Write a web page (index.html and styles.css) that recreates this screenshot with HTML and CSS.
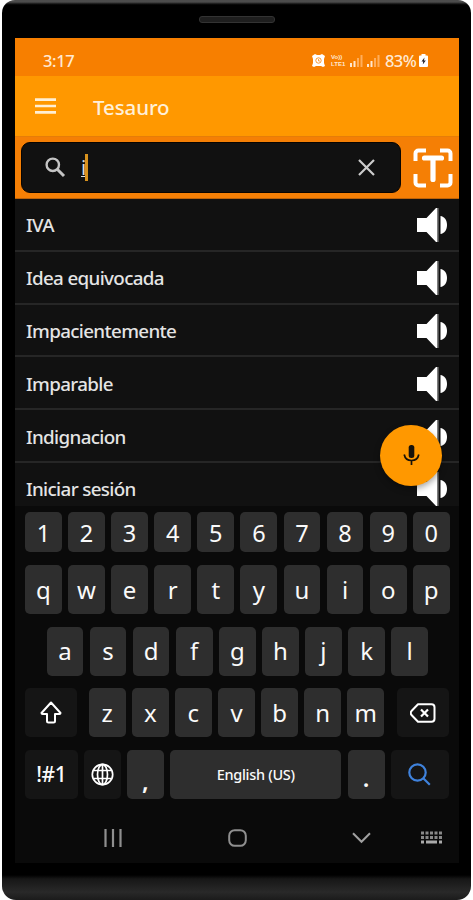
FILE: index.html
```html
<!DOCTYPE html>
<html lang="es">
<head>
<meta charset="utf-8">
<title>Tesauro</title>
<link rel="stylesheet" href="styles.css">
</head>
<body>
<svg class="defs" width="0" height="0">
  <symbol id="speaker" viewBox="0 0 32 36"><path d="M1 11h9.500L20 1h1.500v34H20l-9.500-10H1z" fill="#fff"/><path d="M22 1v34" stroke="#777" stroke-width="1.200"/><path d="M24.500 9c3.800.5 6.500 4 6.500 9s-2.700 8.500-6.500 9z" fill="#fff"/></symbol>
</svg>
<div class="phone">
  <div class="earpiece"></div>
  <main class="screen">
    <div class="status">
      <span class="time">3:17</span>
      <div class="indicators">
        <svg class="alarm" width="13" height="13" viewBox="0 0 13 13"><path d="M0 2 3 0l2 1h3l2-1 3 2-1 3v4l1 3-2 1-2-1H4l-2 1-2-1 1-3V5z" fill="#fff"/><circle cx="6.500" cy="6.500" r="2.700" fill="none" stroke="#f77f00" stroke-width=".8"/><path d="M6.500 5v2H8" fill="none" stroke="#f77f00" stroke-width=".7"/></svg>
        <span class="volte"><span>Vo))</span><span>LTE1</span></span>
        <svg class="signal" width="13" height="12" viewBox="0 0 13 12"><path d="M0 8h2v4H0zM3.500 6h2v6h-2z" fill="#ffe7ce"/><path d="M7 3h2v9H7zM10.500 0h2v12h-2z" fill="#ffae5b"/></svg>
        <svg class="signal second" width="13" height="12" viewBox="0 0 13 12"><path d="M0 9h2v3H0zM3.500 6h2v6h-2z" fill="#ffe7ce"/><path d="M7 3h2v9H7zM10.500 0h2v12h-2z" fill="#ffae5b"/></svg>
        <span class="percent">83%</span>
        <svg class="battery" width="9" height="13" viewBox="0 0 9 13"><path d="M2.500 0h4v1.500H8a1 1 0 0 1 1 1V12a1 1 0 0 1-1 1H1a1 1 0 0 1-1-1V2.500a1 1 0 0 1 1-1h1.500z" fill="#fff"/><path d="M5.500 3.500 2.500 7.600h1.700L3.800 10.500 6.800 6.500H5z" fill="#26222a"/></svg>
      </div>
    </div>
    <header class="appbar">
      <svg width="22" height="16" viewBox="0 0 22 16"><path d="M0 1.700h21M0 8h21M0 14.300h21" stroke="#ffefd4" stroke-width="2.700"/></svg>
      <h1>Tesauro</h1>
    </header>
    <div class="searchbar">
      <div class="field">
        <svg class="lens" width="21" height="21" viewBox="0 0 21 21"><circle cx="7.800" cy="7.800" r="6.200" fill="none" stroke="#c4c4c4" stroke-width="2.400"/><path d="m12.500 12.500 6.500 6.500" stroke="#c4c4c4" stroke-width="3"/></svg>
        <span class="query">i</span><span class="caret"></span>
        <svg class="clear" width="17" height="17" viewBox="0 0 17 17"><path d="m1 1 15 15M16 1 1 16" stroke="#ccc" stroke-width="2.200"/></svg>
      </div>
      <svg class="scan" width="40" height="40" viewBox="0 0 40 40" fill="none" stroke="#fff" stroke-width="4"><path d="M2.500 13V5.500a3 3 0 0 1 3-3H13M27 2.500h7.500a3 3 0 0 1 3 3V13M37.500 26v8.500a3 3 0 0 1-3 3H27M13 37.500H5.500a3 3 0 0 1-3-3V26"/><path d="M11.500 10h17M20 10v21.500" stroke-width="5.200" stroke-linecap="round"/></svg>
    </div>
    <section class="results">
      <div class="row"><span>IVA</span><svg width="32" height="36"><use href="#speaker"/></svg></div>
      <div class="row"><span>Idea equivocada</span><svg width="32" height="36"><use href="#speaker"/></svg></div>
      <div class="row"><span>Impacientemente</span><svg width="32" height="36"><use href="#speaker"/></svg></div>
      <div class="row"><span>Imparable</span><svg width="32" height="36"><use href="#speaker"/></svg></div>
      <div class="row"><span>Indignacion</span><svg width="32" height="36"><use href="#speaker"/></svg></div>
      <div class="row"><span>Iniciar sesión</span><svg width="32" height="36"><use href="#speaker"/></svg></div>
    </section>
    <div class="fab">
      <svg width="17" height="21" viewBox="0 0 17 21"><rect x="5.700" y="0" width="5.600" height="13" rx="2.500" fill="#17120a"/><path d="M1.200 9.500c.8 4 3.800 6 7.300 6s6.500-2 7.300-6M8.500 15v5" fill="none" stroke="#17120a" stroke-width="1.700"/></svg>
    </div>
    <section class="keyboard">
      <div class="keys digits"><b>1</b><b>2</b><b>3</b><b>4</b><b>5</b><b>6</b><b>7</b><b>8</b><b>9</b><b>0</b></div>
      <div class="keys"><b>q</b><b>w</b><b>e</b><b>r</b><b>t</b><b>y</b><b>u</b><b>i</b><b>o</b><b>p</b></div>
      <div class="keys home"><b>a</b><b>s</b><b>d</b><b>f</b><b>g</b><b>h</b><b>j</b><b>k</b><b>l</b></div>
      <div class="keys lower">
        <b class="dark shift"><svg width="22" height="23" viewBox="0 0 22 23"><path d="M11 1.500 1.500 12q0 1 1 1H7v7q0 1.500 1.500 1.500h5Q15 21.500 15 20v-7h4.500q1 0 1-1z" fill="none" stroke="#fff" stroke-width="2" stroke-linejoin="round"/></svg></b>
        <b>z</b><b>x</b><b>c</b><b>v</b><b>b</b><b>n</b><b>m</b>
        <b class="dark back"><svg width="26" height="20" viewBox="0 0 26 20"><path d="M8 1.300h13.500q3 0 3 3v11.400q0 3-3 3H8L1.500 12q-1.500-2 0-4z" fill="none" stroke="#fff" stroke-width="2" stroke-linejoin="round"/><path d="m11 6.500 7 7m0-7-7 7" stroke="#fff" stroke-width="2.200"/></svg></b>
      </div>
      <div class="keys bottom">
        <b class="dark symbols">!#1</b>
        <b class="dark"><svg width="23" height="23" viewBox="0 0 23 23" fill="none" stroke="#fff" stroke-width="1.700"><circle cx="11.500" cy="11.500" r="10.200"/><ellipse cx="11.500" cy="11.500" rx="5" ry="10.200"/><path d="M11.500 1v21M2.500 7.500h18M2.500 15.500h18"/></svg></b>
        <b class="punct">,</b>
        <b class="space">English (US)</b>
        <b class="punct period">.</b>
        <b class="dark go"><svg width="23" height="23" viewBox="0 0 23 23" fill="none" stroke="#3f82dc" stroke-width="2.200"><circle cx="9.500" cy="9.500" r="8.200"/><path d="m15.300 15.300 6.500 6.500"/></svg></b>
      </div>
      <nav class="nav">
        <svg class="recent" width="18" height="18" viewBox="0 0 18 18"><path d="M1.500 0v18M9 0v18M16.500 0v18" stroke="#8f8f8f" stroke-width="2.200"/></svg>
        <svg class="homebtn" width="19" height="18" viewBox="0 0 19 18"><rect x="1.200" y="1.200" width="16.600" height="15.600" rx="5.500" fill="none" stroke="#8f8f8f" stroke-width="2"/></svg>
        <svg class="hide" width="19" height="12" viewBox="0 0 19 12"><path d="m1 1.200 8.500 8.600L18 1.200" fill="none" stroke="#a0a0a0" stroke-width="2"/></svg>
        <svg class="switch" width="21" height="13" viewBox="0 0 21 13"><path d="M0 2h21M0 6.500h21" stroke="#888" stroke-width="3" stroke-dasharray="3 1.500"/><path d="M0 11h3M5 11h11M18 11h3" stroke="#aaa" stroke-width="3"/></svg>
      </nav>
    </section>
  </main>
</div>
</body>
</html>
```
FILE: styles.css
```css
* { box-sizing: border-box; }
body { margin: 0; background: #fff; font-family: "Noto Sans", sans-serif; }
svg { display: block; flex: none; }
.defs { position: absolute; }
.phone {
  width: 469px; height: 900px; margin: 0 2px; padding: 38px 12px 37px 13px;
  border-radius: 13px 13px 14px 14px; overflow: hidden; position: relative;
  background: linear-gradient(#4c4c4c 0 2px, #111 4px, #000 5px 875px, #171717 879px, #292929 892px, #1b1b1b 900px);
}
.earpiece {
  position: absolute; left: 197px; top: 16px; width: 76px; height: 7px;
  border: 1px solid #333; border-radius: 3px; background: #1e1e1e;
}
.screen { position: relative; width: 444px; height: 825px; background: #111; overflow: hidden; }
.status {
  height: 38px; background: #f77f00; color: #ffe9d2;
  display: flex; align-items: center; justify-content: space-between; padding: 7px 31px 0 28px;
}
.time { font-size: 16.500px; line-height: 20px; letter-spacing: -.4px; font-weight: 500; }
.indicators { display: flex; align-items: center; }
.volte { display: flex; flex-direction: column; margin: 0 2px 0 6px; width: 17px; font: 700 6px/7px "Liberation Sans", sans-serif; }
.volte span { height: 7px; }
.second { margin-left: 4px; }
.percent { margin-left: 5px; width: 34px; font-size: 16.500px; line-height: 20px; letter-spacing: -.6px; font-weight: 500; white-space: nowrap; }
.appbar { height: 60px; background: #ff9800; display: flex; align-items: center; padding-left: 20px; }
.appbar h1 { margin: 1px 0 0 36px; color: #fff0d8; font-size: 20.500px; font-weight: 500; letter-spacing: -.1px; line-height: 28px; }
.searchbar { height: 63px; background: #f57f05; border-top: 1px solid #e67d08; border-bottom: 1px solid #bd6208; display: flex; padding: 5px 6px; }
.field { width: 380px; height: 51px; border-radius: 9px; background: #111; border: 1px solid #080400; display: flex; align-items: center; padding: 0 25px 0 23px; }
.query { margin-left: 15px; font-size: 20px; line-height: 26px; color: #ddd; text-decoration: underline; text-decoration-thickness: 1px; }
.caret { width: 3px; height: 27px; background: #d8921e; margin-left: -1px; }
.clear { margin-left: auto; }
.scan { margin: 6px 0 0 12px; }
.results { height: 307px; overflow: hidden; }
.row {
  height: 52.800px; border-bottom: 2px solid #262626; color: #e4e4e4;
  display: flex; align-items: center; justify-content: space-between; padding: 2px 11px 0 11px;
  font-size: 18.800px; line-height: 26px; font-weight: 500; letter-spacing: -.65px;
}
.fab {
  position: absolute; left: 365px; top: 387px; width: 62px; height: 61px; border-radius: 50%;
  background: #ff9800; display: flex; align-items: center; justify-content: center;
  box-shadow: 0 3px 6px rgba(0, 0, 0, .35);
}
.keyboard { position: relative; height: 357px; background: #0a0a0a; padding: 6px 9px 0 10px; }
.keys { display: flex; gap: 6.300px; height: 49px; margin-bottom: 12.500px; }
.keys b {
  width: 36.800px; height: 100%; border-radius: 5px; background: #2e2e2e; color: #fafafa;
  font-size: 24px; font-weight: 400; line-height: 30px; display: flex; align-items: center; justify-content: center; flex: none;
}
.keys.digits { height: 40px; margin-bottom: 13px; }
.keys.digits b { font-size: 23.500px; padding-top: 1px; }
.keys.home { padding-left: 21.500px; }
.keys .dark { background: #151515; }
.keys .shift { width: 51.500px; margin-right: 6px; }
.keys .back { width: 51.500px; margin-left: 7px; }
.keys .symbols { width: 52.500px; font-size: 21px; font-weight: 500; letter-spacing: -.5px; }
.keys .punct { align-items: flex-end; padding-bottom: 3px; font-weight: 600; }
.keys .period { padding-bottom: 6px; }
.keys .space { width: 171.500px; font-size: 14.500px; font-weight: 500; letter-spacing: -.3px; }
.keys .go { width: 58px; }
.nav { display: flex; align-items: center; height: 53px; }
.recent { margin-left: 79px; }
.homebtn { margin-left: 106px; }
.hide { margin-left: 105px; }
.switch { margin-left: 50px; }
```
